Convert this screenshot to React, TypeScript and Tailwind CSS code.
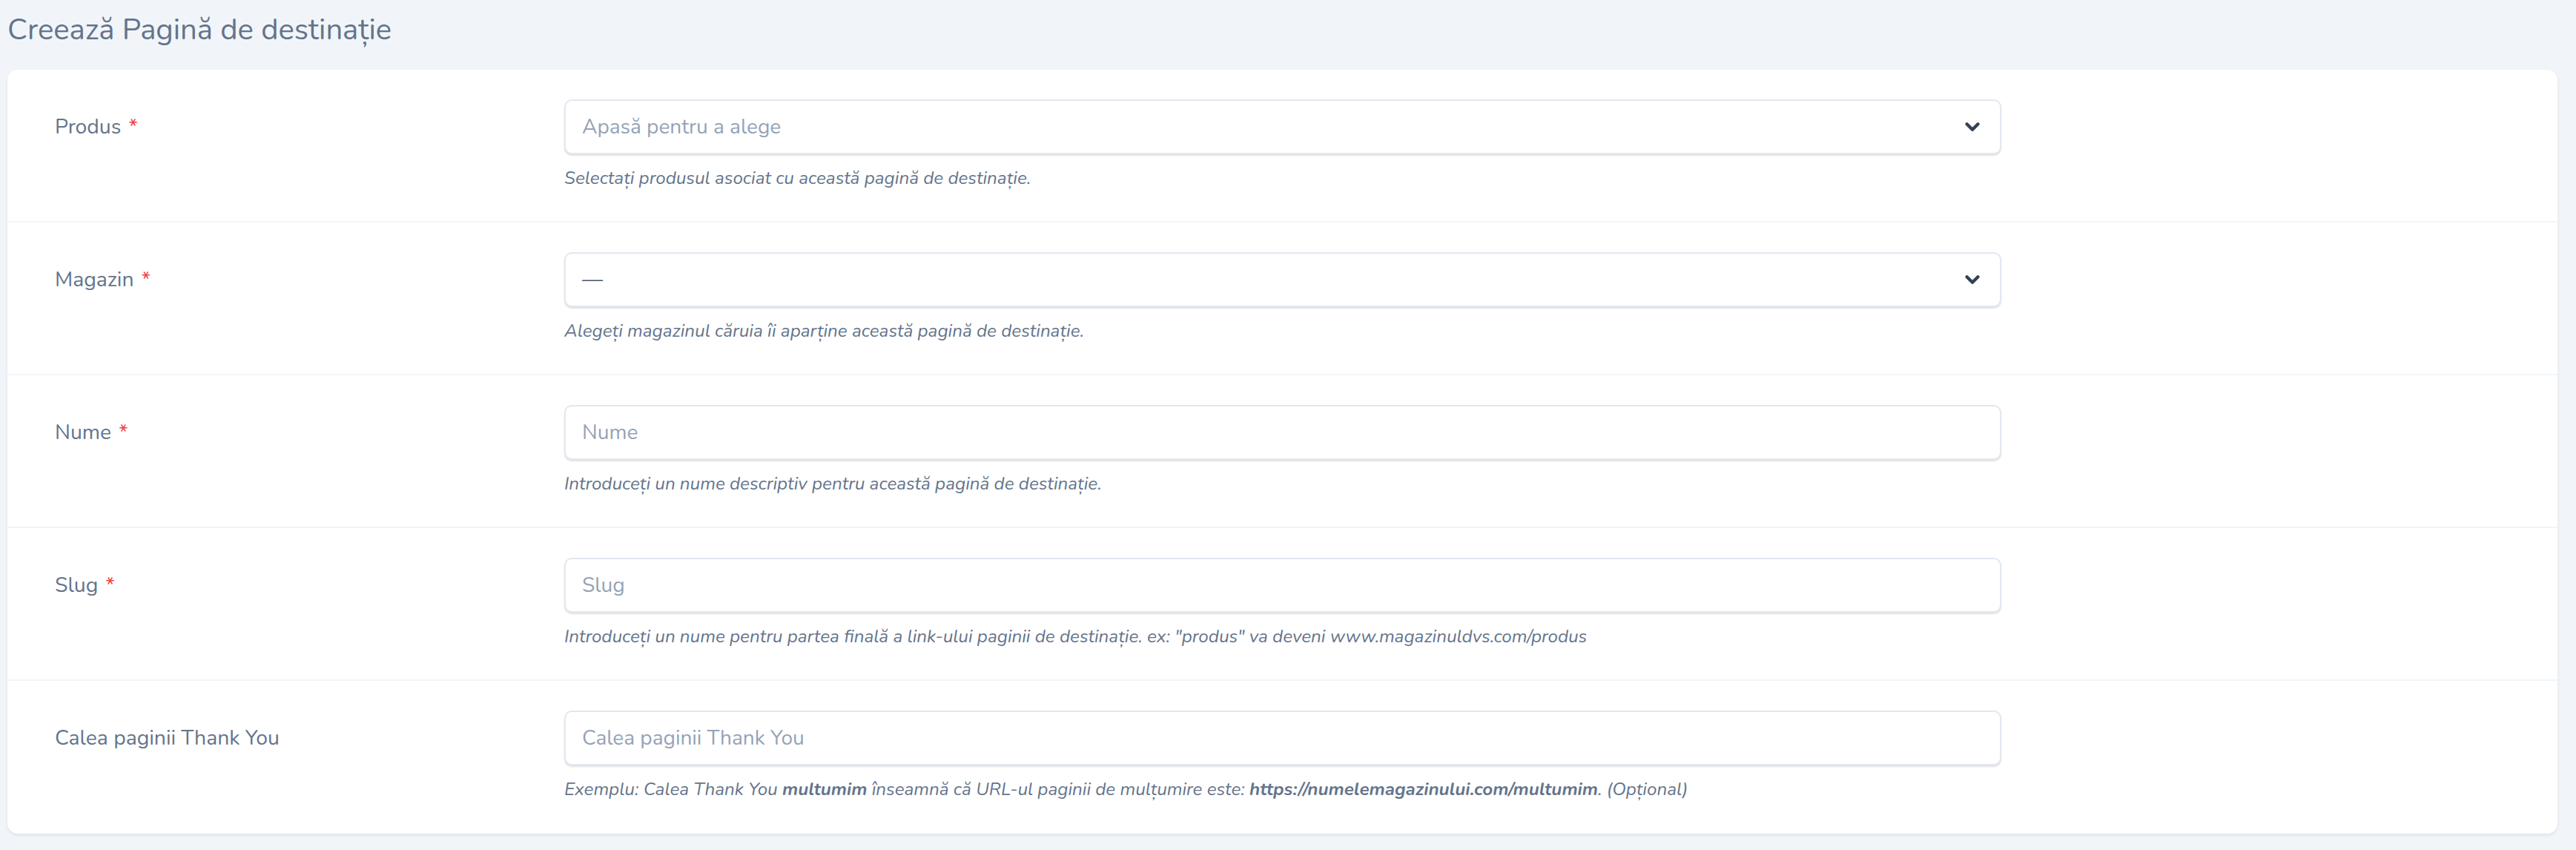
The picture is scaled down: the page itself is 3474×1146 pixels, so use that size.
import { ChevronDown } from "lucide-react";

type Field = {
  label: string;
  required?: boolean;
  kind: "select" | "input";
  placeholder?: string;
  value?: string;
  help: React.ReactNode;
};

const fields: Field[] = [
  {
    label: "Produs",
    required: true,
    kind: "select",
    placeholder: "Apasă pentru a alege",
    help: "Selectați produsul asociat cu această pagină de destinație.",
  },
  {
    label: "Magazin",
    required: true,
    kind: "select",
    value: "—",
    help: "Alegeți magazinul căruia îi aparține această pagină de destinație.",
  },
  {
    label: "Nume",
    required: true,
    kind: "input",
    placeholder: "Nume",
    help: "Introduceți un nume descriptiv pentru această pagină de destinație.",
  },
  {
    label: "Slug",
    required: true,
    kind: "input",
    placeholder: "Slug",
    help: 'Introduceți un nume pentru partea finală a link-ului paginii de destinație. ex: "produs" va deveni www.magazinuldvs.com/produs',
  },
  {
    label: "Calea paginii Thank You",
    kind: "input",
    placeholder: "Calea paginii Thank You",
    help: (
      <>
        Exemplu: Calea Thank You <b className="font-bold">multumim</b> înseamnă că URL-ul paginii de mulțumire este:{" "}
        <b className="font-bold">https://numelemagazinului.com/multumim</b>. (Opțional)
      </>
    ),
  },
];

function Control({ field }: { field: Field }) {
  const base =
    "flex h-[74px] w-full items-center rounded-[10px] border-2 border-[#e2e8f0] bg-white px-[22px] text-[28px] shadow-[0_2px_2px_rgba(0,0,0,0.12)]";

  if (field.kind === "select") {
    return (
      <div className={`${base} justify-between`}>
        <span className={field.value ? "text-[#475569]" : "text-[#94a3b8]"}>{field.value ?? field.placeholder}</span>
        <ChevronDown className="size-[30px] text-[#334155]" strokeWidth={3.5} />
      </div>
    );
  }

  return (
    <input
      placeholder={field.placeholder}
      className={`${base} text-[#475569] outline-none placeholder:text-[#94a3b8]`}
    />
  );
}

function Row({ field, last }: { field: Field; last: boolean }) {
  return (
    <div className={`flex items-start pl-[64px] pt-[40px] ${last ? "pb-[43px]" : "border-b-2 border-[#f1f5f9] pb-[41px]"}`}>
      <div className="flex h-[74px] w-[687px] shrink-0 items-center text-[28.3px] text-[#64748b]">
        {field.label}
        {field.required && <span className="ml-[10px] text-[#ef4444]">*</span>}
      </div>
      <div className="w-[1938px] shrink-0">
        <Control field={field} />
        <p className="mt-[17px] text-[24.2px] leading-[32px] italic text-[#64748b]">{field.help}</p>
      </div>
    </div>
  );
}

export default function App() {
  return (
    <div
      className="min-h-[1146px] w-full bg-[#f1f5f9] px-[10px]"
      style={{ fontFamily: '"Nunito", "Lato", "Noto Sans", sans-serif' }}
    >
      <h1 className="pt-[12px] pb-[26px] text-[40px] leading-[56px] text-[#64748b]">Creează Pagină de destinație</h1>
      <div className="w-[3439px] rounded-[14px] bg-white shadow-[0_2px_4px_rgba(0,0,0,0.08)]">
        {fields.map((f, i) => (
          <Row key={f.label} field={f} last={i === fields.length - 1} />
        ))}
      </div>
    </div>
  );
}
